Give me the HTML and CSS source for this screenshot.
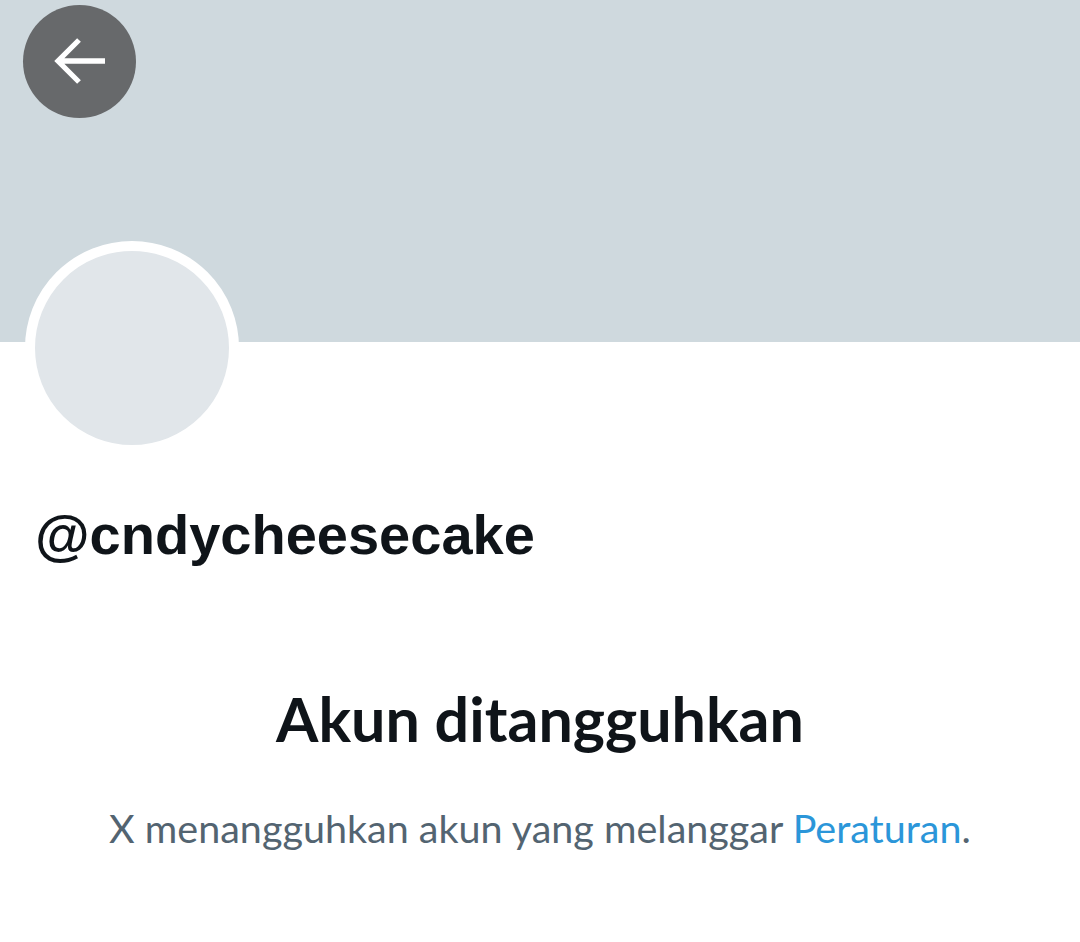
FILE: index.html
```html
<!DOCTYPE html>
<html lang="id">
<head>
<meta charset="utf-8">
<link rel="stylesheet" href="styles.css">
</head>
<body>
<div class="page">
  <header class="banner">
    <button class="back" aria-label="Kembali">
      <svg viewBox="0 0 113 113" width="113" height="113"><path d="M35 56H82M56 35L35 56L56 77" fill="none" stroke="#fff" stroke-width="5.3" stroke-linecap="butt" stroke-linejoin="miter"/></svg>
    </button>
  </header>
  <div class="profile">
    <div class="avatar-row">
      <div class="avatar"></div>
    </div>
    <div class="handle">@cndycheesecake</div>
  </div>
  <section class="notice">
    <h1 class="title">Akun ditangguhkan</h1>
    <p class="desc">X menangguhkan akun yang melanggar <a href="#">Peraturan</a>.</p>
  </section>
</div>
</body>
</html>
```
FILE: styles.css
```css
* { box-sizing: border-box; }
html, body { margin: 0; padding: 0; background: #fff; }
body { font-family: "Liberation Sans", Arial, sans-serif; color: #0f1419; }
.page { width: 1080px; height: 942px; overflow: hidden; }
.banner {
  height: 342px;
  background: #cfd9de;
  padding: 5px 0 0 23px;
}
.back {
  width: 113px; height: 113px;
  border-radius: 50%;
  border: 0;
  background: #67696b;
  display: flex; align-items: center; justify-content: center;
  padding: 0;
}
.back svg { display: block; }
.profile { padding: 0 0 0 25px; }
.avatar-row { margin-top: -101px; height: 214px; }
.avatar {
  width: 214px; height: 214px;
  border-radius: 50%;
  border: 10px solid #fff;
  background: #e1e6ea;
}
.handle {
  margin-top: 48px;
  padding-left: 10px;
  font-size: 56px;
  font-weight: 700;
  line-height: 64px;
  color: #0f1419;
}
.notice { text-align: center; margin-top: 116px; }
.title {
  margin: 0;
  font-family: Lato, "Liberation Sans", sans-serif;
  font-size: 61px;
  font-weight: 700;
  line-height: 72px;
  color: #0f1419;
}
.desc {
  margin: 49px 0 0;
  font-family: Lato, "Liberation Sans", sans-serif;
  font-size: 39.5px;
  line-height: 48px;
  color: #536471;
}
.desc a { color: #2b96d9; text-decoration: none; }
```
